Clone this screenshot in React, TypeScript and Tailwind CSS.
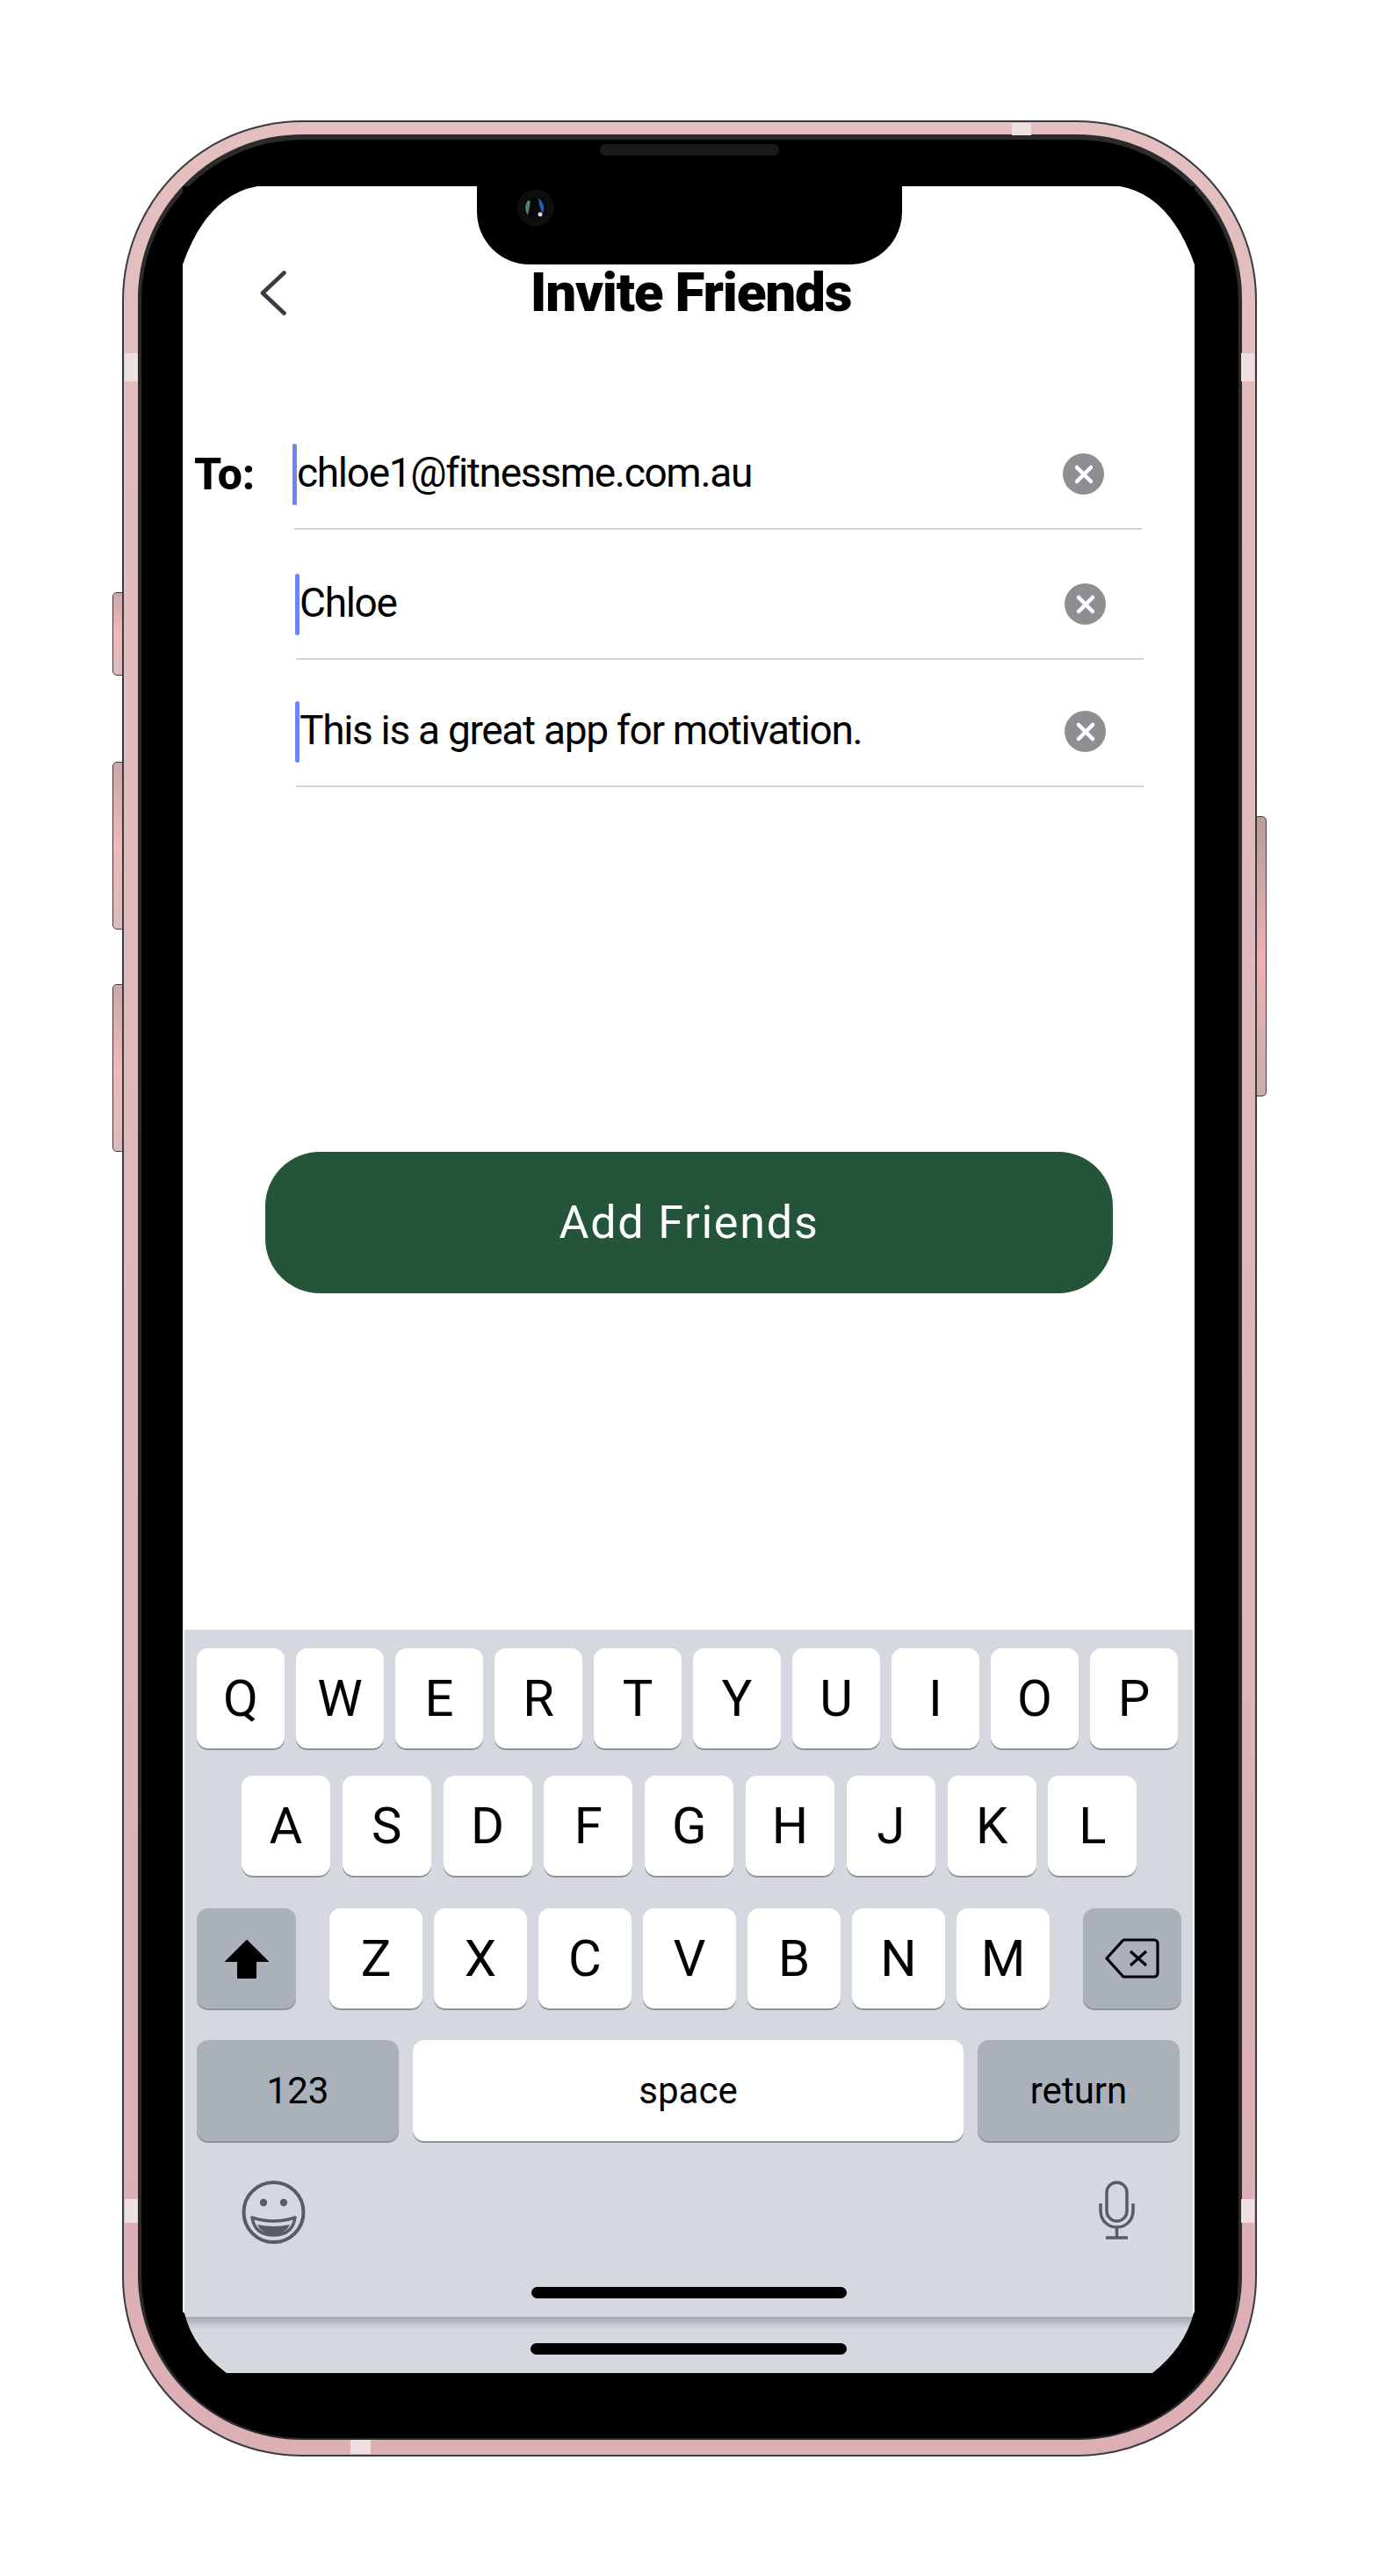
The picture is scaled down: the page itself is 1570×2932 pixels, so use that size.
import { X } from "lucide-react";

const rowOne = ["Q", "W", "E", "R", "T", "Y", "U", "I", "O", "P"];
const rowTwo = ["A", "S", "D", "F", "G", "H", "J", "K", "L"];
const rowThree = ["Z", "X", "C", "V", "B", "N", "M"];

const fields = [
  { text: "chloe1@fitnessme.com.au", label: "To:", offset: "w-[127px]", gap: "mt-[151px]", caret: "-ml-[2px]" },
  { text: "Chloe", label: "", offset: "w-[129px]", gap: "mt-[50px]", caret: "-ml-[1px]" },
  { text: "This is a great app for motivation.", label: "", offset: "w-[129px]", gap: "mt-[47px]", caret: "-ml-[1px]" },
];

function Key({ label, className }: { label: string; className: string }) {
  return (
    <div className={`flex h-[114px] items-center justify-center rounded-[13px] bg-white text-[58px] leading-none text-black shadow-[0_2px_0_#8e929a] ${className}`}>
      {label}
    </div>
  );
}

function ClearButton() {
  return (
    <div className="mr-[43px] ml-auto flex h-[47px] w-[47px] items-center justify-center rounded-full bg-[#8e8e93]">
      <X className="h-[32px] w-[32px] text-white" strokeWidth={3.4} />
    </div>
  );
}

function Field({ text, label, offset, gap, caret }: (typeof fields)[number]) {
  return (
    <div className={`flex ${gap}`}>
      <div className={`${offset} pt-[7px] pl-[13px] text-[50px] leading-[56px] font-extrabold text-black`}>{label}</div>
      <div className="flex h-[98px] w-[965px] items-start border-b-2 border-[#d4d4d4]">
        <div className={`${caret} h-[70px] w-[5px] rounded-[3px] bg-[#6b85f5]`} />
        <span className="pt-[6px] text-[46px] leading-[54px] tracking-[-1.300px] whitespace-nowrap text-black">{text}</span>
        <div className="flex h-[70px] flex-1 items-center pb-[1px]">
          <ClearButton />
        </div>
      </div>
    </div>
  );
}

function Keyboard() {
  return (
    <div className="mx-[2px] mt-auto flex h-[782px] flex-col bg-[#d5d8df]">
      <div className="mt-[21px] flex gap-[13px] pl-[14px]">
        {rowOne.map((k) => (
          <Key key={k} label={k} className="w-[100px]" />
        ))}
      </div>
      <div className="mt-[31px] flex gap-[13.800px] pl-[65px]">
        {rowTwo.map((k) => (
          <Key key={k} label={k} className="w-[101px]" />
        ))}
      </div>
      <div className="mt-[37px] flex pl-[14px]">
        <div className="flex h-[114px] w-[113px] items-center justify-center rounded-[13px] bg-[#abb1bb] shadow-[0_2px_0_#8e929a]">
          <svg width="52" height="45" viewBox="0 0 52 45">
            <path d="M26 0.5 L51.5 26 H37 V44 a1.5 1.5 0 0 1 -1.5 1 H16.5 a1.5 1.5 0 0 1 -1.5 -1 V26 H0.5 Z" fill="#000" />
          </svg>
        </div>
        <div className="ml-[38px] flex gap-[13px]">
          {rowThree.map((k) => (
            <Key key={k} label={k} className="w-[106px]" />
          ))}
        </div>
        <div className="ml-[38px] flex h-[114px] w-[112px] items-center justify-center rounded-[13px] bg-[#abb1bb] shadow-[0_2px_0_#8e929a]">
          <svg width="62" height="46" viewBox="0 0 62 46" fill="none" stroke="#000" strokeLinejoin="round">
            <path d="M2 23 L21 2 H56 a4 4 0 0 1 4 4 V40 a4 4 0 0 1 -4 4 H21 Z" strokeWidth="3.2" />
            <path d="M29 15 L47 31 M47 15 L29 31" strokeWidth="3.2" />
          </svg>
        </div>
      </div>
      <div className="mt-[36px] flex text-[42px] leading-none text-black">
        <div className="ml-[14px] flex h-[115px] w-[230px] items-center justify-center rounded-[13px] bg-[#abb1bb] shadow-[0_2px_0_#8e929a]">123</div>
        <div className="ml-[16px] flex h-[115px] w-[627px] items-center justify-center rounded-[13px] bg-white shadow-[0_2px_0_#8e929a]">space</div>
        <div className="ml-[16px] flex h-[115px] w-[230px] items-center justify-center rounded-[13px] bg-[#abb1bb] shadow-[0_2px_0_#8e929a]">return</div>
      </div>
      <div className="mt-[45px] flex items-start justify-between pr-[66px] pl-[65px]">
        <svg width="73" height="72" viewBox="0 0 73 72" fill="none">
          <circle cx="36.5" cy="36" r="34" stroke="#575c66" strokeWidth="4" />
          <circle cx="25" cy="25" r="4.2" fill="#575c66" />
          <circle cx="48" cy="25" r="4.2" fill="#575c66" />
          <path d="M12 42 Q36.500 50 61 42 Q58 62 36.500 62 Q15 62 12 42 Z" stroke="#575c66" strokeWidth="3.500" strokeLinejoin="round" />
          <path d="M18 50 Q36.500 54 55 50 Q50 61 36.500 61 Q23 61 18 50 Z" fill="#575c66" />
        </svg>
        <svg width="41" height="67" viewBox="0 0 41 67" fill="none" stroke="#575c66" strokeWidth="3.500">
          <rect x="9" y="2" width="23" height="44" rx="11.500" />
          <path d="M2 26 V34 C2 45 10 53 20.500 53 C31 53 39 45 39 34 V26" />
          <path d="M20.500 53 V64 M8 65 H33" />
        </svg>
      </div>
      <div className="mx-auto mt-[49px] h-[13px] w-[359px] rounded-full bg-black" />
    </div>
  );
}

export default function App() {
  return (
    <div className="flex h-[2932px] w-[1570px] justify-center bg-white pt-[137px] font-[family-name:Roboto,sans-serif]">
      <div className="relative h-[2659px] w-[1292px]">
        <div className="absolute top-[537px] -left-[11px] h-[95px] w-[14px] rounded-l-[5px] border border-[#4a3a3c] bg-gradient-to-b from-[#c9a9a9] via-[#f0b8bc] to-[#d8bdbd]" />
        <div className="absolute top-[730px] -left-[11px] h-[191px] w-[14px] rounded-l-[5px] border border-[#4a3a3c] bg-gradient-to-b from-[#c9a9a9] via-[#f0b8bc] to-[#d8bdbd]" />
        <div className="absolute top-[983px] -left-[11px] h-[191px] w-[14px] rounded-l-[5px] border border-[#4a3a3c] bg-gradient-to-b from-[#c9a9a9] via-[#f0b8bc] to-[#d8bdbd]" />
        <div className="absolute top-[792px] -right-[11px] h-[319px] w-[14px] rounded-r-[5px] border border-[#4a3a3c] bg-gradient-to-b from-[#b89c9c] via-[#efb0b2] to-[#c9aeae]" />

        <div className="relative h-full rounded-[205px] bg-[#3a3a42] p-[2px]">
          <div className="h-full rounded-[203px] bg-gradient-to-b from-[#e3bfc0] to-[#dcafb5] pt-[14px] pr-[15px] pb-[17px] pl-[16px]">
            <div className="h-full rounded-[187px] bg-[#2b2b2b] pt-[6px] pr-[4px] pb-[2px] pl-[4px]">
              <div className="h-full rounded-[183px] bg-black pt-[53px] pr-[50px] pb-[74px] pl-[47px]">
                <div className="flex h-full flex-col bg-white">
                  <div className="mt-[90px] grid h-[52px] grid-cols-[1fr_auto_1fr] items-center">
                    <div className="pl-[88px]">
                      <svg width="30" height="51" viewBox="0 0 30 51" fill="none" stroke="#3a3a44" strokeWidth="4.600" strokeLinecap="round" strokeLinejoin="round">
                        <path d="M27.500 2.500 L3 25.500 L27.500 48.500" />
                      </svg>
                    </div>
                    <h1 className="ml-[5px] text-[62px] leading-none font-black tracking-[-1.200px] text-black">Invite Friends</h1>
                  </div>
                  {fields.map((f) => (
                    <Field key={f.text} {...f} />
                  ))}
                  <button className="mt-[415px] ml-[94px] flex h-[161px] w-[965px] items-center justify-center rounded-[62px] bg-[#24543a] text-[52px] tracking-[1.800px] text-white">
                    Add Friends
                  </button>
                  <Keyboard />
                  <div className="mx-[2px] h-[64px] bg-[#d5d8df]">
                    <div className="h-[14px] bg-gradient-to-b from-[#a5a8ad] to-[#d5d8df]" />
                    <div className="mx-auto mt-[16px] h-[13px] w-[360px] rounded-full bg-black" />
                  </div>
                </div>
              </div>
            </div>
          </div>
        </div>

        {/* bezel corners cut into the screen */}
        <svg className="absolute top-[75px] left-[69px]" width="85" height="89" viewBox="0 0 85 89">
          <path d="M0 0 H85 Q28 10 0 89 Z" fill="#000" />
        </svg>
        <svg className="absolute top-[75px] right-[71px]" width="85" height="89" viewBox="0 0 85 89">
          <path d="M85 0 H0 Q57 10 85 89 Z" fill="#000" />
        </svg>
        <svg className="absolute bottom-[95px] left-[69px]" width="52" height="70" viewBox="0 0 52 70">
          <path d="M0 0 L2 2 Q12 42 50 70 H0 Z" fill="#000" />
        </svg>
        <svg className="absolute right-[71px] bottom-[95px]" width="50" height="70" viewBox="0 0 50 70">
          <path d="M50 0 L49 2 Q38 42 2 70 H50 Z" fill="#000" />
        </svg>

        {/* notch, speaker and camera sit over the screen */}
        <div className="absolute top-[75px] left-[404px] h-[89px] w-[484px] rounded-b-[60px] bg-black" />
        <div className="absolute top-[27px] left-[544px] h-[13px] w-[204px] rounded-full bg-[#1a1a1a]" />
        <svg className="absolute top-[78px] left-[449px]" width="43" height="43" viewBox="0 0 43 43">
          <circle cx="21.5" cy="21.5" r="21" fill="#0e0e0e" />
          <circle cx="21.5" cy="21.5" r="13" fill="#07090b" />
          <path d="M13 13 Q7 21 13 30 Q15 21 16 14 Z" fill="#55806c" />
          <path d="M25 10 Q34 18 30 28 Q26 22 25 10 Z" fill="#1f62ad" />
          <circle cx="27" cy="29" r="2.500" fill="#d8d8e4" />
        </svg>

        {/* lighter antenna bands in the pink rim */}
        <div className="absolute top-[3px] left-[1013px] h-[14px] w-[22px] bg-[#eee0e0]" />
        <div className="absolute bottom-[3px] left-[260px] h-[16px] w-[23px] bg-[#eee0e0]" />
        <div className="absolute top-[265px] left-[3px] h-[32px] w-[15px] bg-[#eee0e0]" />
        <div className="absolute top-[265px] right-[3px] h-[32px] w-[15px] bg-[#eee0e0]" />
        <div className="absolute top-[2366px] left-[3px] h-[27px] w-[15px] bg-[#eee0e0]" />
        <div className="absolute top-[2366px] right-[3px] h-[27px] w-[15px] bg-[#eee0e0]" />
      </div>
    </div>
  );
}
